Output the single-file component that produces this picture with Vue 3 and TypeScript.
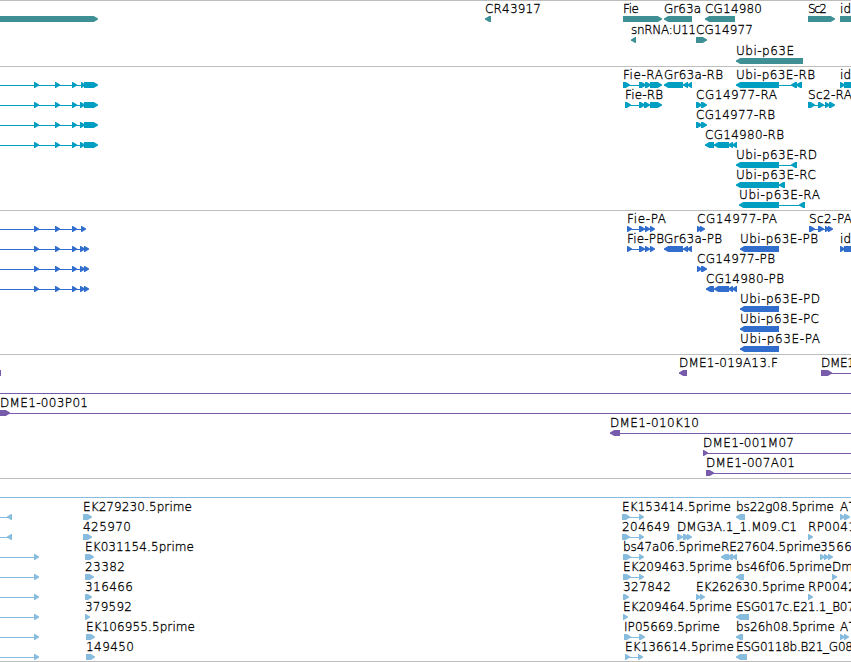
<template>
  <main class="viewer">
    <section v-for="track in tracks" :key="track.name" class="track" :class="track.name">
      <svg :width="viewWidth" :height="track.height">
        <g v-for="(row, i) in track.rows" :key="i" :transform="`translate(0 ${18 + i * track.pitch})`">
          <g v-for="(feature, j) in row" :key="j" class="feature">
            <rect
              v-if="feature.end > feature.start"
              :x="feature.start"
              y="0"
              :width="feature.end - feature.start"
              height="1"
            />
            <path v-for="(d, k) in feature.shapes" :key="k" :d="d" />
            <text
              v-if="feature.label"
              :x="feature.x"
              y="-6"
              :textLength="feature.width"
              lengthAdjust="spacing"
            >{{ feature.label }}</text>
          </g>
        </g>
      </svg>
    </section>
  </main>
</template>

<script setup lang="ts">
type Strand = '+' | '-'

interface Feature {
  start: number
  end: number
  shapes: string[]
  label: string
  x: number
  width: number
}
interface Track {
  name: string
  height: number
  pitch: number
  rows: Feature[][]
}

const viewWidth = 851

// a block ends in a 5px arrow head on the side of its strand
function block(a: number, b: number, strand: Strand) {
  const head = Math.min(5, b - a)
  if (strand === '+') {
    const h = b - head
    return `M${a} -3H${h + 0.8}L${b} -0.4V0.4L${h + 0.8} 3H${a}Z`
  }
  const h = a + head
  return `M${b} -3H${h - 0.8}L${a} -0.4V0.4L${h - 0.8} 3H${b}Z`
}

function feat(strand: Strand, exons: string, label = '', width = 0, lineEnd = 0, lineStart = -1): Feature {
  const parts = exons
    ? exons.split(' ').map((e) => e.split(':').map(Number))
    : []
  const x = parts.length ? parts[0][0] : 0
  return {
    start: lineStart >= 0 ? lineStart : x,
    end: lineEnd || (parts.length ? parts[parts.length - 1][1] - 4 : 0),
    shapes: parts.map(([a, b]) => block(a, b, strand)),
    label,
    x,
    width,
  }
}

const left = (exons: string) => feat('+', exons, '', 0, 0, 0)
const estLeft = () => left('34:39')
const bar = () => feat('+', '', '', 0, viewWidth, 0)

const mrnaLeft = '34:39 55:60 72:77 80:85 84:98'
const cdsLeft = '34:39 55:60 72:77 80:85 84:89'

const tracks: Track[] = [
  {
    name: 'gene',
    height: 65,
    pitch: 21,
    rows: [
      [
        feat('+', '0:98'),
        feat('-', '485:491', 'CR43917', 56),
        feat('+', '623:662', 'Fie', 16),
        feat('-', '664:692', 'Gr63a', 37),
        feat('-', '705:735', 'CG14980', 57),
        feat('+', '808:835', 'Sc2', 19),
        feat('+', '840:870', 'id', 11),
      ],
      [feat('-', '631:636', 'snRNA:U11', 65), feat('+', '696:707', 'CG14977', 57)],
      [feat('-', '736:803', 'Ubi-p63E', 58)],
    ],
  },
  {
    name: 'mrna',
    height: 143,
    pitch: 20,
    rows: [
      [
        left('34:39 55:60 72:77 81:85 84:98'),
        feat('+', '623:630 639:646 645:651 650:662', 'Fie-RA', 40),
        feat('-', '664:683 683:688 687:692', 'Gr63a-RB', 59),
        feat('-', '736:779 791:797 796:802', 'Ubi-p63E-RB', 79),
        feat('+', '840:845 844:870', 'id', 11),
      ],
      [
        left(mrnaLeft),
        feat('+', '625:631 639:645 644:650 650:662', 'Fie-RB', 38),
        feat('+', '696:702 701:707', 'CG14977-RA', 81),
        feat('+', '808:815 818:824 825:830 829:835', 'Sc2-RA', 44),
      ],
      [left(mrnaLeft), feat('+', '696:702 701:707', 'CG14977-RB', 79)],
      [left(mrnaLeft), feat('-', '705:714 714:729 728:733 732:737', 'CG14980-RB', 79)],
      [feat('-', '736:779 791:797', 'Ubi-p63E-RD', 81)],
      [feat('-', '736:779 779:785', 'Ubi-p63E-RC', 80)],
      [feat('-', '739:779 799:805', 'Ubi-p63E-RA', 81)],
    ],
  },
  {
    name: 'cds',
    height: 143,
    pitch: 20,
    rows: [
      [
        left('34:39 55:60 72:77 81:86'),
        feat('+', '627:632 639:645 645:650 650:655', 'Fie-PA', 39),
        feat('+', '697:702 700:705', 'CG14977-PA', 80),
        feat('+', '809:815 818:824 825:830 828:833', 'Sc2-PA', 43),
      ],
      [
        left(cdsLeft),
        feat('+', '627:632 639:645 645:650 650:655', 'Fie-PB', 37),
        feat('-', '664:683 683:688 687:692', 'Gr63a-PB', 58),
        feat('-', '740:779', 'Ubi-p63E-PB', 78),
        feat('+', '840:845 844:870', 'id', 11),
      ],
      [left(cdsLeft), feat('+', '697:702 701:707', 'CG14977-PB', 78)],
      [left(cdsLeft), feat('-', '706:714 714:729 728:733 732:737', 'CG14980-PB', 78)],
      [feat('-', '740:779', 'Ubi-p63E-PD', 80)],
      [feat('-', '740:779', 'Ubi-p63E-PC', 79)],
      [feat('-', '740:779', 'Ubi-p63E-PA', 80)],
    ],
  },
  {
    name: 'bac',
    height: 123,
    pitch: 20,
    rows: [
      [
        feat('-', '-7:1'),
        feat('-', '679:687', 'DME1-019A13.F', 99),
        feat('+', '821:832', 'DME1', 34, viewWidth),
      ],
      [bar()],
      [feat('+', '0:10', 'DME1-003P01', 88, viewWidth)],
      [feat('-', '610:620', 'DME1-010K10', 89, viewWidth)],
      [feat('+', '703:708', 'DME1-001M07', 91, viewWidth)],
      [feat('+', '706:714', 'DME1-007A01', 89, viewWidth)],
    ],
  },
  {
    name: 'est',
    height: 182,
    pitch: 20,
    rows: [
      [bar()],
      [
        feat('-', '7:12', '', 0, 0, 0),
        feat('+', '83:92', 'EK279230.5prime', 109),
        feat('+', '622:630 639:644', 'EK153414.5prime', 109),
        feat('-', '736:745', 'bs22g08.5prime', 98),
        feat('+', '840:845 844:850', 'AT', 16),
      ],
      [
        feat('-', '7:12', '', 0, 0, 0),
        feat('+', '83:92', '425970', 48),
        feat('+', '622:630 639:644', '204649', 48),
        feat('+', '677:683 683:689 687:692', 'DMG3A.1_1.M09.C1', 120),
        feat('+', '808:813', 'RP0041', 48),
      ],
      [
        estLeft(),
        feat('+', '85:94', 'EK031154.5prime', 109),
        feat('+', '623:631 639:644', 'bs47a06.5prime', 98),
        feat('-', '721:729 727:733 732:737', 'RE27604.5prime', 100),
        feat('+', '820:825 824:829 828:833', '3566', 32),
      ],
      [
        estLeft(),
        feat('+', '85:94', '23382', 40),
        feat('+', '623:631 639:644', 'EK209463.5prime', 109),
        feat('-', '736:744', 'bs46f06.5prime', 96),
        feat('+', '832:837', 'Dm', 21),
      ],
      [
        estLeft(),
        feat('+', '85:92', '316466', 48),
        feat('+', '623:629', '327842', 48),
        feat('+', '696:701 700:705', 'EK262630.5prime', 109),
        feat('+', '808:813', 'RP0042', 48),
      ],
      [
        estLeft(),
        feat('+', '85:90', '379592', 47),
        feat('+', '623:628', 'EK209464.5prime', 109),
        feat('-', '736:749', 'ESG017c.E21.1_B07', 119),
      ],
      [
        estLeft(),
        feat('+', '86:95', 'EK106955.5prime', 109),
        feat('+', '624:631 639:645', 'IP05669.5prime', 96),
        feat('-', '736:743', 'bs26h08.5prime', 99),
        feat('+', '840:845 844:849', 'AT', 16),
      ],
      [
        estLeft(),
        feat('+', '86:95', '149450', 48),
        feat('+', '625:630 638:643', 'EK136614.5prime', 109),
        feat('-', '736:747', 'ESG0118b.B21_G08', 117),
      ],
    ],
  },
]
</script>

<style>
body {
  margin: 0;
  background: #fff;
  overflow: hidden;
}
</style>

<style scoped>
.viewer {
  width: 851px;
  display: flex;
  flex-direction: column;
  border-bottom: 1px solid #bdbdbd;
}
.track {
  border-top: 1px solid #bdbdbd;
}
.track svg {
  display: block;
  overflow: hidden;
}
.feature {
  fill: currentColor;
}
.gene {
  color: #3f9095;
}
.mrna {
  color: #009fc2;
}
.cds {
  color: #306dcd;
}
.bac {
  color: #785bab;
}
.est {
  color: #87bcde;
}
text {
  font-family: 'DejaVu Sans', sans-serif;
  font-size: 12px;
  font-weight: 200;
  fill: #000;
  stroke: #000;
  stroke-width: 0.3px;
}
</style>
